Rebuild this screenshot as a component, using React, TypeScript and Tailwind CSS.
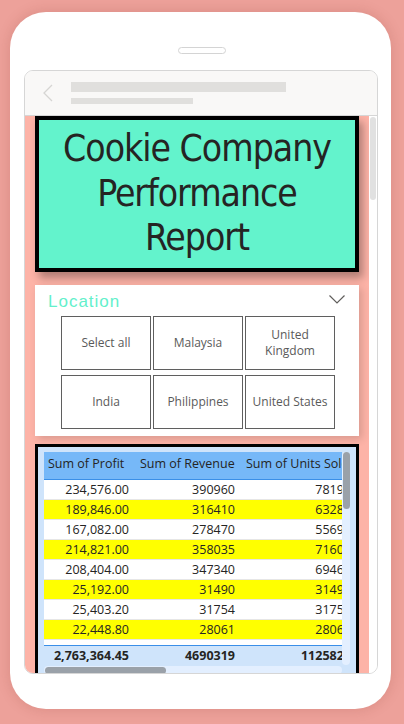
const rows = [
  ['234,576.00', '390960', '78192'],
  ['189,846.00', '316410', '63282'],
  ['167,082.00', '278470', '55694'],
  ['214,821.00', '358035', '71607'],
  ['208,404.00', '347340', '69468'],
  ['25,192.00', '31490', '31490'],
  ['25,403.20', '31754', '31754'],
  ['22,448.80', '28061', '28061'],
];

const locations = ['Select all', 'Malaysia', 'United Kingdom', 'India', 'Philippines', 'United States'];

export default function App() {
  return (
    <div className="w-[404px] h-[724px] bg-[#eda19a] pt-[12px] pl-[10px] font-['Open_Sans',sans-serif]">
      <div className="w-[381px] h-[697px] bg-white rounded-[36px] shadow-[0_0_14px_rgba(120,40,30,0.18)] flex flex-col items-start pl-[14px]">
        {/* speaker */}
        <div className="mt-[35px] ml-[154px] w-[48px] h-[7px] rounded-full border border-[#d4d4d4]" />

        {/* screen */}
        <div className="mt-[16px] w-[354px] h-[604px] border border-[#d6d6d6] rounded-[9px] overflow-hidden flex flex-col">
          {/* header */}
          <div className="h-[45px] shrink-0 bg-[#f9f8f7] border-b border-[#d6d6d6] flex items-start">
            <svg className="ml-[17px] mt-[13px]" width="11" height="18" viewBox="0 0 11 18">
              <path d="M10 1 L2 9 L10 17" fill="none" stroke="#d6d5d3" strokeWidth="1.3" />
            </svg>
            <div className="ml-[18px] mt-[11px] flex flex-col">
              <div className="w-[215px] h-[10px] bg-[#e0dfdd]" />
              <div className="mt-[6px] w-[122px] h-[6px] bg-[#e0dfdd]" />
            </div>
          </div>

          {/* body */}
          <div className="flex-1 flex flex-row overflow-hidden">
            <div className="w-[344px] shrink-0 bg-[#fdb3a7] pl-[10px] flex flex-col">
              {/* title */}
              <div className="w-[324px] h-[156px] shrink-0 border-4 border-black bg-[#63f3cc] shadow-[4px_6px_8px_rgba(0,0,0,0.3)] flex flex-col items-center justify-center text-[37px] leading-[44.5px] tracking-[-1px] text-[#252423] font-['DejaVu_Sans_Condensed',Roboto,sans-serif]">
                <div>Cookie Company</div>
                <div>Performance</div>
                <div>Report</div>
              </div>

              {/* slicer */}
              <div className="mt-[13px] w-[324px] h-[151px] shrink-0 bg-white shadow-[3px_3px_8px_rgba(0,0,0,0.15)] flex flex-col">
                <div className="pt-[7px] pl-[13px] pr-[14px] flex items-start justify-between">
                  <span className="text-[17px] leading-[20px] tracking-[1px] text-[#63f0cb] font-['Liberation_Sans',sans-serif]">Location</span>
                  <svg className="mt-[3px]" width="16" height="9" viewBox="0 0 16 9">
                    <path d="M0.5 0.5 L8 8 L15.5 0.5" fill="none" stroke="#605e5c" strokeWidth="1.2" />
                  </svg>
                </div>
                <div className="mt-[4px] ml-[26px] grid grid-cols-[90px_90px_90px] gap-x-[2px] gap-y-[5px]">
                  {locations.map((loc) => (
                    <div
                      key={loc}
                      className={`h-[54px] border border-[#5f5f5f] flex items-center justify-center text-center text-[12px] leading-[16px] text-[#5a5a5a] ${
                        loc === 'United Kingdom' ? 'px-[14px]' : 'px-[2px]'
                      }`}
                    >
                      {loc}
                    </div>
                  ))}
                </div>
              </div>

              {/* table */}
              <div className="mt-[8px] w-[324px] h-[260px] shrink-0 border-[3px] border-black bg-[#cfe4fb] pl-[6px] pt-[5px] flex flex-row items-start text-[12.5px] text-[#252423]">
                <div className="w-[298px] shrink-0 overflow-hidden flex flex-col">
                  <div className="w-[314px] h-[28px] bg-[#76b8f8] border-b border-[#3a8fe8] grid grid-cols-[92px_106px_116px] pt-[4px] leading-[16px] whitespace-nowrap">
                    <div className="pl-[4px]">Sum of Profit</div>
                    <div className="pl-[4px]">Sum of Revenue</div>
                    <div className="pl-[4px]">Sum of Units Sold</div>
                  </div>
                  <div className="bg-white w-[314px]">
                    {rows.map((r, i) => (
                      <div
                        key={i}
                        className={`h-[20px] border-b border-[#e6e6e6] grid grid-cols-[92px_106px_116px] items-center text-right leading-[18px] ${
                          i % 2 === 1 ? 'bg-[#ffff00]' : 'bg-white'
                        }`}
                      >
                        <div className="pr-[7px]">{r[0]}</div>
                        <div className="pr-[7px]">{r[1]}</div>
                        <div className="pr-[7px]">{r[2]}</div>
                      </div>
                    ))}
                    <div className="h-[5px]" />
                  </div>
                  <div className="w-[314px] h-[21px] border-t border-[#3a8fe8] bg-[#cfe4fb] grid grid-cols-[92px_106px_116px] items-center text-right font-bold leading-[18px]">
                    <div className="pr-[7px]">2,763,364.45</div>
                    <div className="pr-[7px]">4690319</div>
                    <div className="pr-[7px]">1125820</div>
                  </div>
                  <div className="h-[8px] bg-[#e3efff] rounded-full pl-[1px] flex items-center">
                    <div className="w-[121px] h-[7px] rounded-full bg-[#9aa1a9]" />
                  </div>
                </div>
                <div className="w-[8px] h-[213px] bg-[#e3efff] rounded-full flex justify-center">
                  <div className="w-[7px] h-[57px] rounded-full bg-[#9aa1a9]" />
                </div>
              </div>
            </div>

            {/* page scrollbar */}
            <div className="flex-1 bg-white pl-[1px] pt-[1px]">
              <div className="w-[6px] h-[83px] rounded-full bg-[#e1e1e1]" />
            </div>
          </div>
        </div>
      </div>
    </div>
  );
}
